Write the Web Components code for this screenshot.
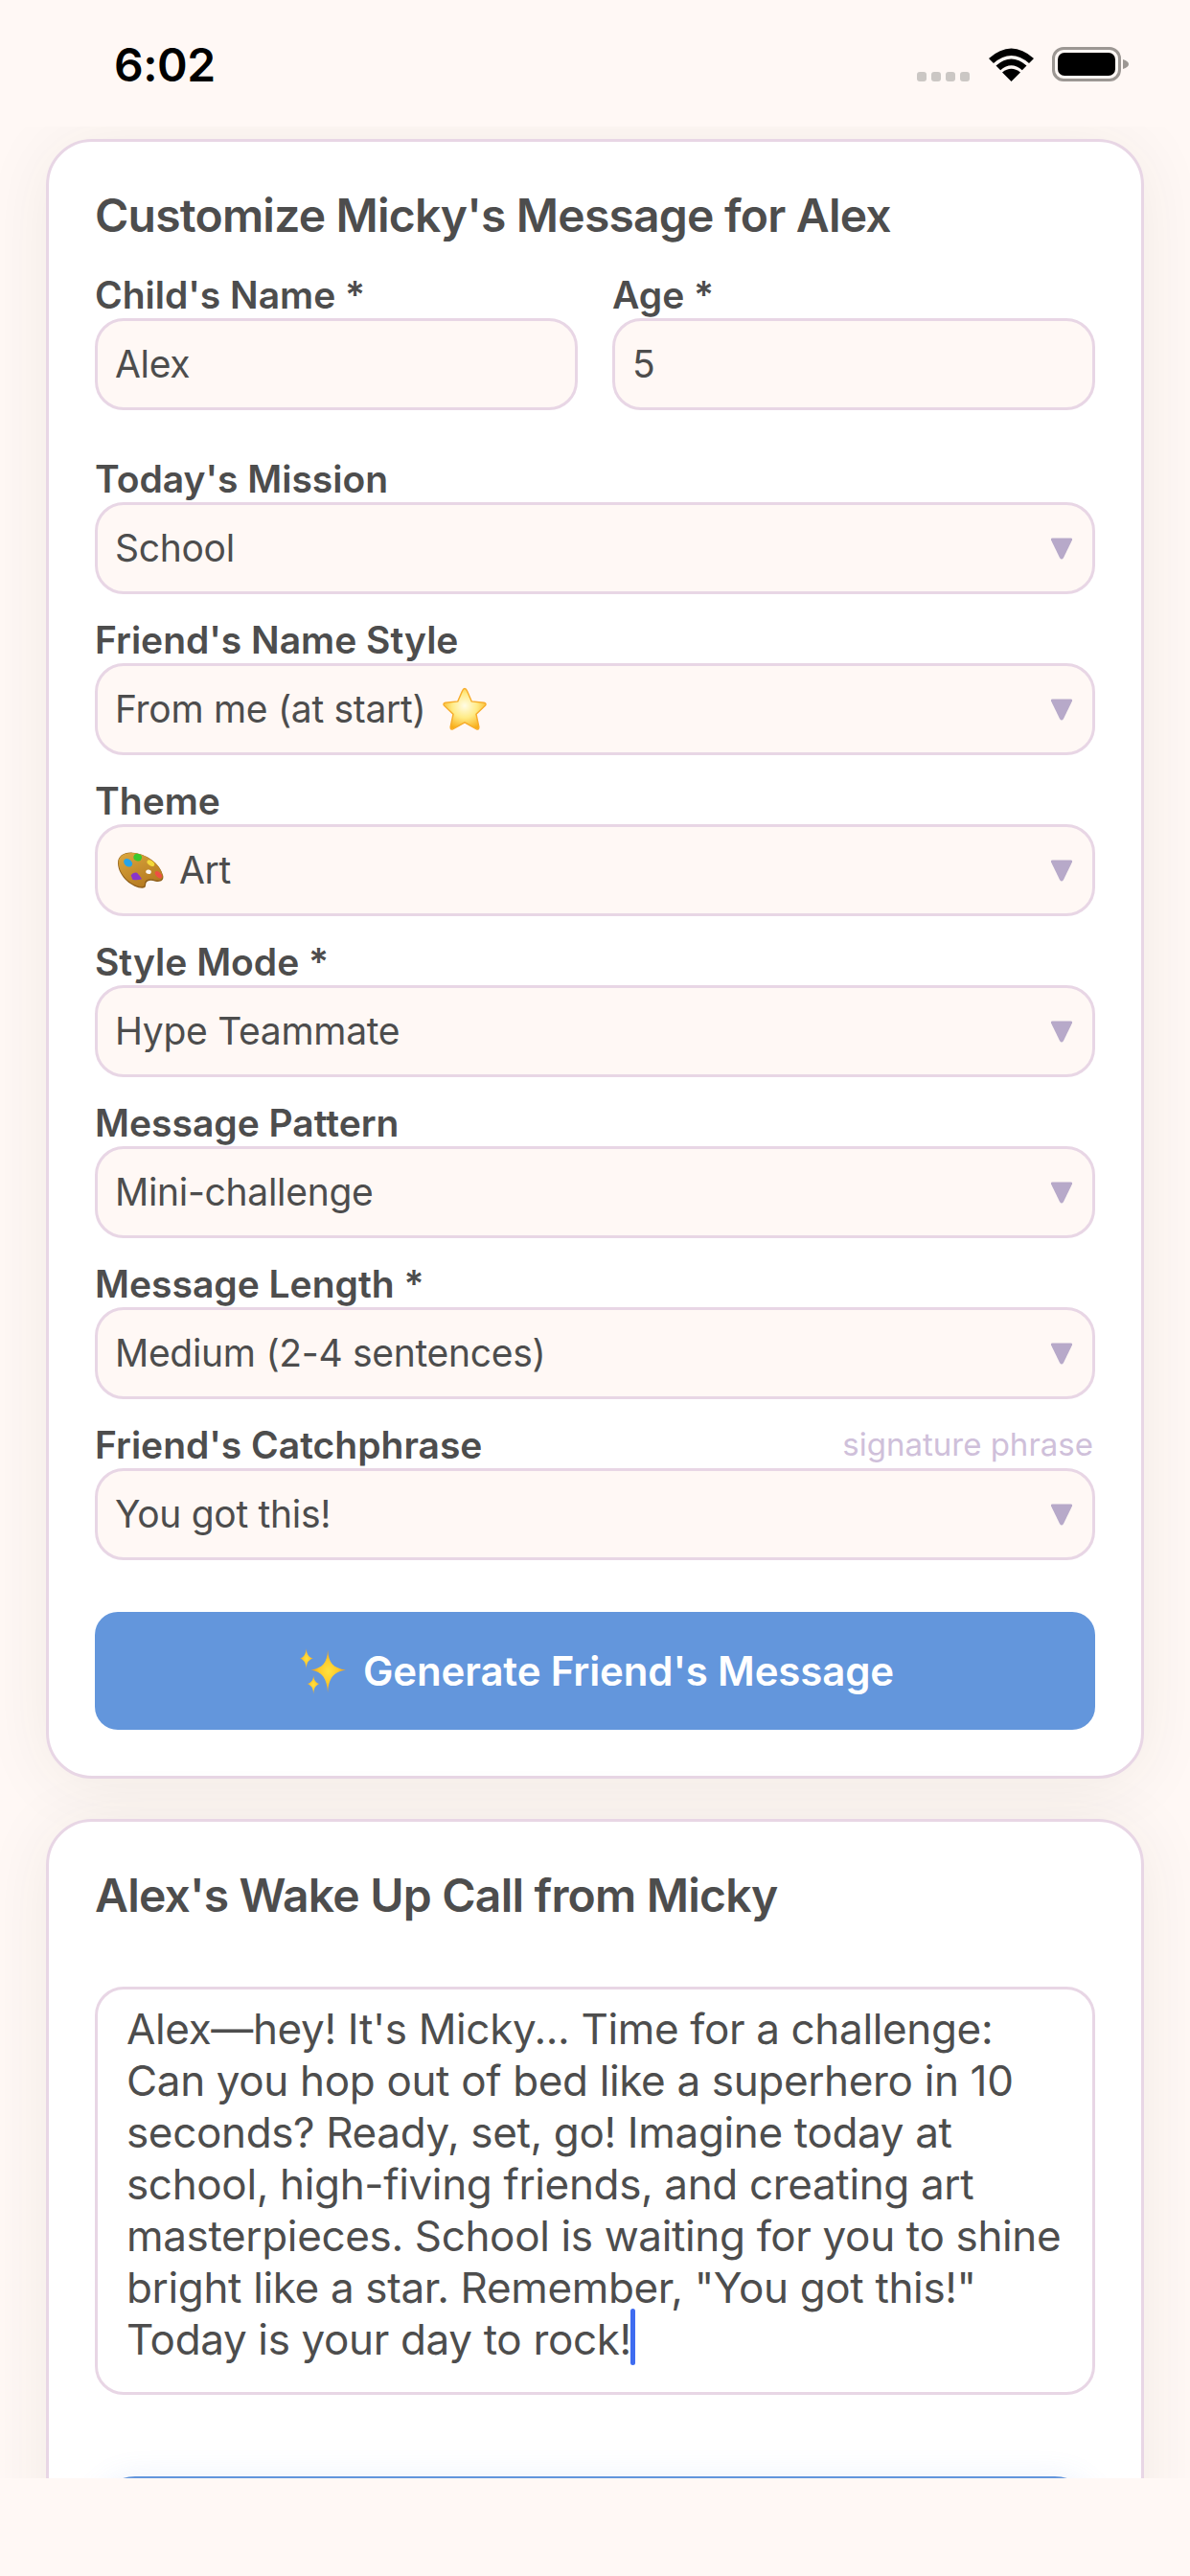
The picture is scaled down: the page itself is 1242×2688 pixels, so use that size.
<!DOCTYPE html>
<html lang="en"><head><meta charset="utf-8"><title>Wake Up Call</title>
<style>
html,body{margin:0;padding:0;background:#fff8f5}
body{width:1242px;height:2688px;overflow:hidden;font-family:Inter,"Liberation Sans",sans-serif;color:#4d4d4d}
</style></head><body>
<app-screen>
<status-bar slot="status"></status-bar>
<form-card heading="Customize Micky's Message for Alex">
  <field-row>
    <form-field label="Child's Name *"><text-box>Alex</text-box></form-field>
    <form-field label="Age *"><text-box>5</text-box></form-field>
  </field-row>
  <form-field label="Today's Mission"><select-box>School</select-box></form-field>
  <form-field label="Friend's Name Style"><select-box><span>From me (at start)</span><emoji-icon name="star"></emoji-icon></select-box></form-field>
  <form-field label="Theme"><select-box><emoji-icon name="palette"></emoji-icon><span>Art</span></select-box></form-field>
  <form-field label="Style Mode *"><select-box>Hype Teammate</select-box></form-field>
  <form-field label="Message Pattern"><select-box>Mini-challenge</select-box></form-field>
  <form-field label="Message Length *"><select-box>Medium (2-4 sentences)</select-box></form-field>
  <form-field label="Friend's Catchphrase" hint="signature phrase"><select-box>You got this!</select-box></form-field>
  <action-button><emoji-icon name="sparkles"></emoji-icon><span>Generate Friend's Message</span></action-button>
</form-card>
<form-card heading="Alex's Wake Up Call from Micky" class="second">
  <message-box>Alex—hey! It's Micky... Time for a challenge: Can you hop out of bed like a superhero in 10 seconds? Ready, set, go! Imagine today at school, high-fiving friends, and creating art masterpieces. School is waiting for you to shine bright like a star. Remember, "You got this!" Today is your day to rock!</message-box>
  <action-button class="glow"></action-button>
</form-card>
</app-screen>
<script>
const def=(n,css,html)=>{customElements.define(n,class extends HTMLElement{
  connectedCallback(){ if(this.shadowRoot)return; const r=this.attachShadow({mode:'open'});
    r.innerHTML='<style>'+css+'</style>'+(typeof html==='function'?html(this):html);}
})};
const esc=s=>s.replace(/&/g,'&amp;').replace(/</g,'&lt;');
def('app-screen',`:host{display:flex;flex-direction:column;width:1242px;height:2688px}
 .scroll{height:2454px;overflow:hidden;padding:13px 48px 0;box-sizing:border-box;display:flex;flex-direction:column;gap:42px}
 .bottom{height:102px}`,
 `<slot name="status"></slot><div class="scroll"><slot></slot></div><div class="bottom"></div>`);
def('status-bar',`:host{display:flex;align-items:flex-start;height:132px;box-sizing:border-box;padding:44px 64px 0 119px;justify-content:space-between;color:#000}
 .t{font:600 48px/48px Inter,sans-serif;letter-spacing:-.5px}
 .r{display:flex;align-items:flex-start;margin-top:5px}
 svg{display:block}`,
 `<div class="t">6:02</div><div class="r"><svg width="222" height="36" viewBox="0 0 222 36">
  <g fill="#cbc7c4"><rect x="1" y="26" width="10" height="10" rx="3"/><rect x="16" y="26" width="10" height="10" rx="3"/><rect x="31" y="26" width="10" height="10" rx="3"/><rect x="46" y="26" width="10" height="10" rx="3"/></g>
  <g fill="#000"><path d="M99.500 36 L90 26.500 Q99.500 19 109 26.500 Z"/><path d="M83.500 19.500 Q99.500 5.500 115.500 19.500 L110.800 24.300 Q99.500 14.300 88.200 24.300 Z"/><path d="M76 12 Q99.500 -9 123 12 L118 17 Q99.500 1 81 17 Z"/></g>
  <rect x="143.500" y="1.500" width="69" height="33" rx="10.500" fill="none" stroke="#9c9793" stroke-width="3"/>
  <rect x="148" y="6" width="60" height="24" rx="7" fill="#000"/>
  <path d="M216 13 Q222 15 222 18 Q222 21 216 23 Z" fill="#9c9793"/>
 </svg></div>`);
def('form-card',`:host{display:block;flex:none;background:#fff;border:3px solid #e8d6e5;border-radius:48px;padding:48px;box-shadow:0 6px 72px rgba(60,50,0,.07)}
 h2{margin:-1px 0 29px;font:570 48px/60px Inter,sans-serif;letter-spacing:-.78px;color:#4d4d4d}
 :host(.second) h2{margin-bottom:65px}`,
 h=>`<h2>${esc(h.getAttribute('heading'))}</h2><slot></slot>`);
def('field-row',`:host{display:grid;grid-template-columns:1fr 1fr;gap:36px;margin-bottom:24px}`,`<slot></slot>`);
def('form-field',`:host{display:block;margin-bottom:24px}
 .l{display:flex;justify-content:space-between;align-items:flex-start;height:48px;font:570 39px/47px Inter,sans-serif;color:#4d4d4d}
 .h{font:400 33px/46px Inter,sans-serif;color:#cfc0da;margin-right:2px}`,
 h=>`<div class="l"><span class="lab">${esc(h.getAttribute('label'))}</span>${h.getAttribute('hint')?`<span class="h">${esc(h.getAttribute('hint'))}</span>`:''}</div><slot></slot>`);
const boxCss=`:host{display:flex;align-items:center;justify-content:space-between;box-sizing:border-box;height:96px;border:3px solid #e8d6e5;border-radius:30px;background:#fff8f5;padding:0 20px 0 18px;font:400 39px/48px Inter,sans-serif;letter-spacing:-.3px;color:#4d4d4d}`;
def('text-box',boxCss,`<span class="v"><slot></slot></span>`);
def('select-box',boxCss+` .v{display:flex;align-items:center;gap:16px;white-space:pre} svg{display:block}`,
 `<span class="v"><slot></slot></span><svg width="24" height="24" viewBox="0 0 24 24"><path d="M2.500 1.500 H21.500 Q23.500 1.500 23 3.500 L14 22 Q12 25 10 22 L1 3.500 Q.5 1.500 2.500 1.500 Z" fill="#b7a9c9"/></svg>`);
def('emoji-icon',`:host{display:inline-block;line-height:0;flex:none} svg{display:block}
 :host([name=palette]){margin-left:3px}`,h=>{
 const n=h.getAttribute('name');
 if(n==='star')return `<svg width="50" height="46" viewBox="0 0 50 48"><defs><radialGradient id="s" cx=".5" cy=".42" r=".6"><stop offset="0" stop-color="#fffce6"/><stop offset=".5" stop-color="#ffeb85"/><stop offset="1" stop-color="#f8ad18"/></radialGradient></defs><path d="M25 1.500 Q26.500 1.500 27.500 4 L32.500 15.500 L46 17 Q49 17.500 47.500 20 L37.500 29.500 L40.500 43.500 Q40.500 47 37.500 45.500 L25 38.500 L12.500 45.500 Q9.500 47 9.500 43.500 L12.500 29.500 L2.500 20 Q1 17.500 4 17 L17.500 15.500 L22.500 4 Q23.500 1.500 25 1.500 Z" fill="url(#s)" stroke="#f7ad2c" stroke-width="1.500"/></svg>`;
 if(n==='palette')return `<svg width="48" height="38" viewBox="72 60 144 114"><defs><linearGradient id="w" x1="0" y1="0" x2=".6" y2="1"><stop offset="0" stop-color="#dca83f"/><stop offset="1" stop-color="#b57a20"/></linearGradient></defs>
  <path d="M72 95 C72 72 92 60 118 62 C160 65 205 95 214 135 C216 150 205 155 190 152 C178 148 165 146 160 158 C158 168 160 172 148 173 C120 172 74 140 72 95 Z" fill="#8f5f1b"/>
  <path d="M74 93 C74 72 93 61 118 63 C160 66 204 96 212 133 C214 146 204 151 190 148 C178 144 162 142 157 154 C155 164 157 168 147 169 C120 168 76 136 74 93 Z" fill="url(#w)"/>
  <ellipse cx="168" cy="122" rx="8.500" ry="6.500" transform="rotate(15 168 122)" fill="#fff8f5"/>
  <ellipse cx="104" cy="94" rx="15" ry="11" transform="rotate(40 104 94)" fill="#27a4e8"/>
  <ellipse cx="134" cy="77" rx="13" ry="11" transform="rotate(15 134 77)" fill="#38c92c"/>
  <ellipse cx="175" cy="95" rx="13" ry="7.500" transform="rotate(35 175 95)" fill="#f4d93a"/>
  <ellipse cx="199" cy="131" rx="13" ry="7.500" transform="rotate(45 199 131)" fill="#ef4f43"/>
  <path d="M113 133 Q120 122 132 125 Q142 135 147 145 Q130 150 118 146 Z" fill="#8a34c9"/></svg>`;
 return `<svg width="48" height="48" viewBox="45 60 145 145"><defs><radialGradient id="g" cx=".5" cy=".5" r=".5"><stop offset="0" stop-color="#ffe23f"/><stop offset=".55" stop-color="#ffc92b"/><stop offset="1" stop-color="#f09a1c"/></radialGradient></defs>
  <path d="M133 65 C135 105 150 122 190 128 C150 134 136 155 133 200 C130 155 116 134 80 128 C116 122 131 105 133 65 Z" fill="url(#g)"/>
  <path d="M65 60 C66 78 72 88 87 92 C72 96 66 106 65 125 C64 106 58 96 45 92 C58 88 64 78 65 60 Z" fill="url(#g)"/>
  <path d="M88 145 C89 160 94 168 108 172 C94 176 89 186 88 205 C87 186 82 176 67 172 C82 168 87 160 88 145 Z" fill="url(#g)"/></svg>`;
});
def('action-button',`:host{display:flex;align-items:center;justify-content:center;gap:18px;box-sizing:border-box;height:123px;margin-top:54px;padding-left:4px;border-radius:24px;background:#6396dc;color:#fff;font:570 42px/48px Inter,sans-serif;letter-spacing:-.15px}
 :host(.glow){margin-top:85px;border-radius:42px;box-shadow:0 0 30px rgba(99,150,220,.12)}`,`<slot></slot>`);
def('message-box',`:host{display:block;box-sizing:border-box;height:426px;border:3px solid #e8d6e5;border-radius:30px;padding:14px 30px;background:#fff;font:400 44px/54px Inter,sans-serif;letter-spacing:-.35px;color:#4d4d4d}
 .c{display:inline-block;position:relative;width:5px;height:0}
 .c::after{content:"";position:absolute;left:-1px;top:-48px;width:5px;height:59px;border-radius:3px;background:#3f6cf0}`,`<slot></slot><span class="c"></span>`);
</script>
</body></html>
